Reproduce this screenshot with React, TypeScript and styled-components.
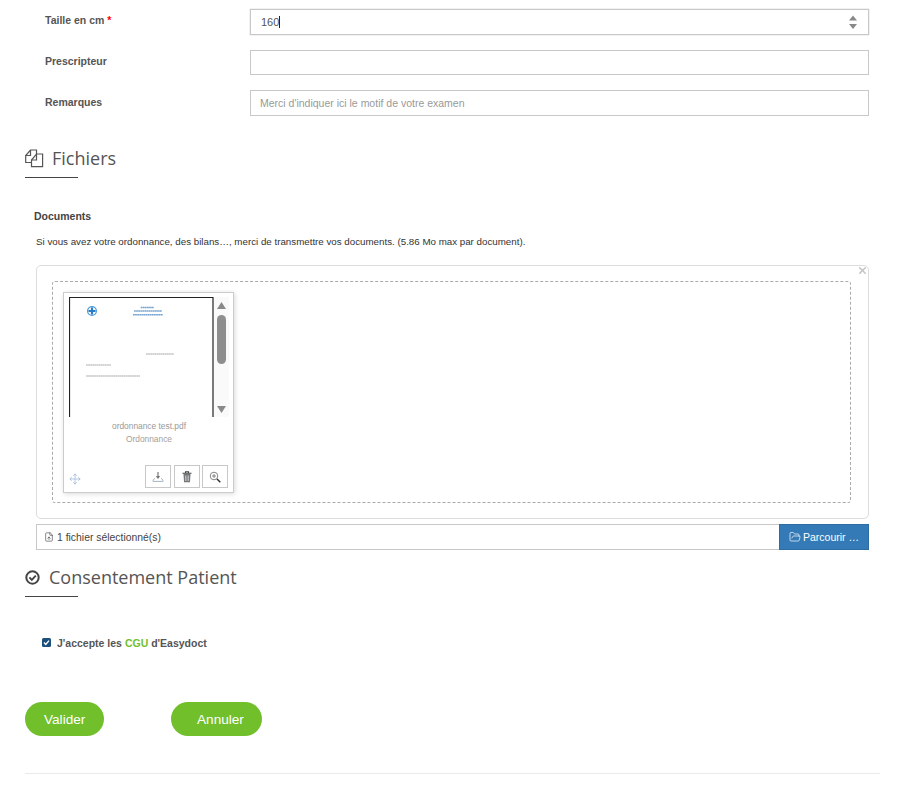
import React from "react";
import styled, { createGlobalStyle } from "styled-components";
import { FileUp, FolderOpen, Move, X } from "lucide-react";

const Global = createGlobalStyle`
  html, body { margin: 0; padding: 0; background: #fff; }
  body { font-family: "Liberation Sans", Arial, sans-serif; color: #333; }
  * { box-sizing: border-box; }
`;

const Page = styled.div`
  width: 916px;
  height: 795px;
  overflow: hidden;
  padding: 9px 36px 0 25px;
`;

const Form = styled.div`
  display: flex;
  flex-direction: column;
  gap: 15px;
  padding-left: 20px;
  padding-right: 11px;
`;

const FormRow = styled.div`
  display: grid;
  grid-template-columns: 205px 619px;
  align-items: center;
`;

const Label = styled.label<{ $dy?: number }>`
  font-size: 10.5px;
  font-weight: 700;
  color: #555;
  margin-top: ${(p) => p.$dy ?? -4}px;
`;

const Required = styled.span`
  color: #f00;
`;

const Field = styled.div<{ $active?: boolean; $h?: number }>`
  position: relative;
  height: ${(p) => p.$h ?? 26}px;
  border: 1px solid #c8c8c8;
  display: flex;
  align-items: center;
  padding-left: 10px;
  font-size: 11px;
  color: #555;
  box-shadow: ${(p) => (p.$active ? "0 0 1px #aaa" : "none")};
`;

const Caret = styled.span`
  display: inline-block;
  width: 1px;
  height: 12px;
  background: #222;
`;

const Placeholder = styled.span`
  color: #999;
  font-size: 10.5px;
  margin-left: -1px;
`;

const Spinner = styled.svg`
  position: absolute;
  right: 10px;
  top: 5px;
`;

const Heading = styled.div<{ $top: number }>`
  margin-top: ${(p) => p.$top}px;
  display: flex;
  align-items: center;
  height: 24px;
  font-family: "Open Sans", sans-serif;
  font-size: 18px;
  color: #555;
`;

const HeadingIcon = styled.span<{ $w: number }>`
  width: ${(p) => p.$w}px;
  display: flex;
  align-items: center;
`;

const Rule = styled.div`
  width: 53px;
  height: 1px;
  background: #444;
  margin-top: 7px;
`;

const DocsTitle = styled.div`
  margin: 32px 0 0 9px;
  font-size: 10.5px;
  font-weight: 700;
  color: #444;
  line-height: 13px;
`;

const DocsHelp = styled.div`
  margin: 12px 0 0 11px;
  font-size: 9.76px;
  color: #333;
  line-height: 13px;
  white-space: nowrap;
`;

const UploadWrap = styled.div`
  margin: 17px 0 0 11px;
  width: 833px;
`;

const Preview = styled.div`
  position: relative;
  height: 254px;
  border: 1px solid #ddd;
  border-radius: 5px;
  padding: 15px;
`;

const Close = styled.span`
  position: absolute;
  top: -1px;
  right: 0;
  color: #c4c4c4;
  display: flex;
`;

const Drop = styled.div`
  height: 222px;
  width: 799px;
  border: 1px dashed #aaa;
  border-radius: 3px;
  padding: 10px;
`;

const Card = styled.div`
  width: 171px;
  height: 201px;
  border: 1px solid #ccc;
  box-shadow: 1px 1px 5px rgba(0, 0, 0, 0.15);
  padding: 4px 4px 0 5px;
  display: flex;
  flex-direction: column;
`;

const Thumb = styled.div`
  display: flex;
  height: 120px;
  overflow: hidden;
  flex-shrink: 0;
`;

const ScrollBar = styled.div`
  width: 15px;
  background: #fafafa;
`;

const CardName = styled.div`
  margin-top: 3px;
  text-align: center;
  font-size: 8.4px;
  line-height: 13px;
  color: #999;
`;

const CardKind = styled(CardName)`
  margin-top: 0;
  color: #a5a09a;
`;

const CardActions = styled.div`
  margin-top: 19px;
  display: flex;
  align-items: center;
  padding-right: 1px;
  gap: 3px;
`;

const MoveHandle = styled.span`
  color: #9db6d8;
  display: flex;
  margin-right: auto;
  margin-top: 5px;
`;

const ActionButton = styled.button`
  width: 26px;
  height: 23px;
  padding: 0;
  background: #fff;
  border: 1px solid #c8c8c8;
  display: flex;
  align-items: center;
  justify-content: center;
  color: #555;
  & + & + & {
    margin-left: -1px;
  }
`;

const FileRow = styled.div`
  margin-top: 5px;
  display: flex;
  height: 26px;
`;

const FileName = styled.div`
  flex: 1;
  display: flex;
  align-items: center;
  gap: 3px;
  padding-left: 7px;
  border: 1px solid #c8c8c8;
  border-right: 0;
  font-size: 10.4px;
  color: #444;
`;

const Browse = styled.button`
  width: 90px;
  background: #337ab7;
  border: 1px solid #2e6da4;
  color: #fff;
  font-family: inherit;
  font-size: 10.5px;
  padding: 0;
  display: flex;
  align-items: center;
  justify-content: center;
  gap: 2px;
`;

const ConsentRow = styled.label`
  margin: 39px 0 0 17px;
  display: flex;
  align-items: center;
  gap: 6px;
  font-size: 10.5px;
  font-weight: 700;
  color: #555;
  height: 13px;
`;

const Check = styled.svg`
  display: block;
`;

const Cgu = styled.span`
  color: #72bf2c;
`;

const Actions = styled.div`
  margin-top: 53px;
  display: flex;
  gap: 67px;
`;

const Pill = styled.button<{ $w: number; $pl: number }>`
  width: ${(p) => p.$w}px;
  height: 34px;
  background: #72bf2c;
  border: 0;
  border-radius: 17px;
  color: #fff;
  font-family: inherit;
  font-size: 13.6px;
  text-align: left;
  padding: 0 0 0 ${(p) => p.$pl}px;
`;

const Divider = styled.div`
  margin-top: 37px;
  width: 855px;
  height: 1px;
  background: #eaeaea;
`;

function FilesIcon() {
  return (
    <svg width="19" height="19" viewBox="0 0 19 19" fill="none" stroke="#555" strokeWidth="1.2">
      <path d="M11.5 5V1H5.5L0.7 6.5V13.5H6.5" />
      <path d="M5.5 1V6.5H0.7" />
      <path d="M11.5 5H17.6V17.6H6.5V11L11.5 5Z" />
      <path d="M11.5 5V11H6.5" />
    </svg>
  );
}

function ConsentIcon() {
  return (
    <svg width="15" height="15" viewBox="0 0 15 15" fill="none" stroke="#444">
      <circle cx="7.5" cy="7.5" r="6.2" strokeWidth="2" />
      <path d="M4.4 7.4L6.8 9.8L10.8 5.6" strokeWidth="1.9" />
    </svg>
  );
}

function PdfPage() {
  return (
    <svg width="145" height="120" viewBox="0 0 145 120">
      <path d="M0.5 120V0.5H144V120" fill="none" stroke="#222" strokeWidth="1.2" />
      <circle cx="23" cy="14" r="4.4" fill="#fff" stroke="#4a98d8" strokeWidth="1.2" />
      <path d="M23 10.5v7M19.5 14h7" stroke="#2a7cc8" strokeWidth="2.2" />
      <g stroke="#3f7fbd" strokeWidth="1.4" strokeDasharray="1.8 0.3" opacity="0.7">
        <path d="M71.7 10.5H85" />
        <path d="M65 14H93" />
        <path d="M64 17.7H94" />
      </g>
      <g stroke="#555" strokeWidth="1.1" strokeDasharray="1.8 0.3" opacity="0.5">
        <path d="M77 57H105" />
        <path d="M17 68H42" />
        <path d="M17 79H71" />
      </g>
    </svg>
  );
}

function PdfScroll() {
  return (
    <ScrollBar>
      <svg width="15" height="120" viewBox="0 0 15 120">
        <path d="M3 12L7.5 5L12 12Z" fill="#8a8a8a" />
        <rect x="3" y="18" width="9" height="49" rx="4.5" fill="#8e8e8e" />
        <path d="M3 109L7.5 116L12 109Z" fill="#8a8a8a" />
      </svg>
    </ScrollBar>
  );
}

function DownloadIcon() {
  return (
    <svg width="12" height="12" viewBox="0 0 12 12" fill="none">
      <path d="M6 1V7" stroke="#777" strokeWidth="1.2" />
      <path d="M3.8 5L6 8L8.2 5Z" fill="#777" />
      <path d="M3 7.5C1.2 8 1 9 1 10.4H11C11 9 10.8 8 9 7.5" stroke="#a3b4c4" strokeWidth="1" />
    </svg>
  );
}

function TrashIcon() {
  return (
    <svg width="10" height="12" viewBox="0 0 10 12">
      <path d="M0.5 2.2H9.5M3.5 2V0.8H6.5V2" fill="none" stroke="#444" strokeWidth="1.1" />
      <path d="M1.5 3H8.5L8 11.2H2Z" fill="#777" />
      <path d="M3.5 4.5V10M5 4.5V10M6.5 4.5V10" stroke="#cfd6dc" strokeWidth="0.7" />
    </svg>
  );
}

function ZoomIcon() {
  return (
    <svg width="12" height="12" viewBox="0 0 12 12" fill="none">
      <circle cx="5" cy="5" r="3.8" stroke="#777" strokeWidth="0.9" />
      <path d="M5 3V7M3 5H7" stroke="#777" strokeWidth="0.9" />
      <path d="M8 8L11.3 11.3" stroke="#333" strokeWidth="1.5" />
    </svg>
  );
}

export default function App() {
  return (
    <Page>
      <Global />
      <Form>
        <FormRow>
          <Label>
            Taille en cm <Required>*</Required>
          </Label>
          <Field $active>
            160
            <Caret />
            <Spinner width="10" height="16" viewBox="0 0 10 16">
              <path d="M1 5.5L5 0.5L9 5.5Z" fill="#888" />
              <path d="M1 9L5 14L9 9Z" fill="#888" />
            </Spinner>
          </Field>
        </FormRow>
        <FormRow>
          <Label>Prescripteur</Label>
          <Field $h={25} />
        </FormRow>
        <FormRow>
          <Label $dy={-2}>Remarques</Label>
          <Field>
            <Placeholder>Merci d'indiquer ici le motif de votre examen</Placeholder>
          </Field>
        </FormRow>
      </Form>

      <Heading $top={30}>
        <HeadingIcon $w={27}>
          <FilesIcon />
        </HeadingIcon>
        Fichiers
      </Heading>
      <Rule />

      <DocsTitle>Documents</DocsTitle>
      <DocsHelp>
        Si vous avez votre ordonnance, des bilans…, merci de transmettre vos documents. (5.86 Mo max par document).
      </DocsHelp>

      <UploadWrap>
        <Preview>
          <Close>
            <X size={11} strokeWidth={3.5} />
          </Close>
          <Drop>
            <Card>
              <Thumb>
                <PdfPage />
                <PdfScroll />
              </Thumb>
              <CardName>ordonnance test.pdf</CardName>
              <CardKind>Ordonnance</CardKind>
              <CardActions>
                <MoveHandle>
                  <Move size={12} strokeWidth={1.5} />
                </MoveHandle>
                <ActionButton>
                  <DownloadIcon />
                </ActionButton>
                <ActionButton>
                  <TrashIcon />
                </ActionButton>
                <ActionButton>
                  <ZoomIcon />
                </ActionButton>
              </CardActions>
            </Card>
          </Drop>
        </Preview>
        <FileRow>
          <FileName>
            <FileUp size={10} strokeWidth={1.5} />1 fichier sélectionné(s)
          </FileName>
          <Browse>
            <FolderOpen size={12} strokeWidth={1.4} />
            Parcourir …
          </Browse>
        </FileRow>
      </UploadWrap>

      <Heading $top={15}>
        <HeadingIcon $w={24}>
          <ConsentIcon />
        </HeadingIcon>
        Consentement Patient
      </Heading>
      <Rule />

      <ConsentRow>
        <Check width="9" height="9" viewBox="0 0 9 9">
          <rect width="9" height="9" rx="1.5" fill="#1d4f7c" />
          <path d="M2 4.5L3.8 6.4L7 2.6" fill="none" stroke="#fff" strokeWidth="1.4" />
        </Check>
        <span>
          J'accepte les <Cgu>CGU</Cgu> d'Easydoct
        </span>
      </ConsentRow>

      <Actions>
        <Pill $w={79} $pl={19}>Valider</Pill>
        <Pill $w={91} $pl={26}>Annuler</Pill>
      </Actions>
      <Divider />
    </Page>
  );
}
